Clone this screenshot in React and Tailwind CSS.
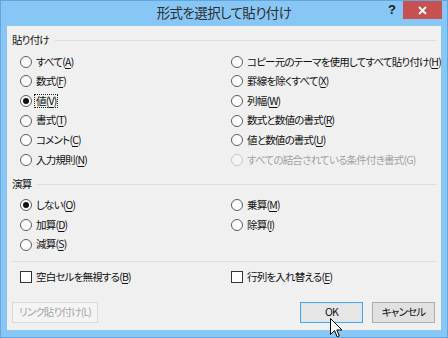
import React from "react";

const font = { fontFamily: '"Noto Sans CJK JP", "Noto Sans", sans-serif' };

function Radio({ checked, disabled }) {
  if (disabled) {
    return <span className="w-[12px] h-[12px] rounded-full border border-[#c6c6c6] bg-[#f4f4f4] shrink-0" />;
  }
  return (
    <span className="w-[12px] h-[12px] rounded-full border border-[#5c5c5c] bg-white shrink-0 flex items-center justify-center">
      {checked ? <span className="w-[6px] h-[6px] rounded-full bg-[#111]" /> : null}
    </span>
  );
}

function Check() {
  return <span className="w-[12px] h-[12px] border border-[#333] bg-white shrink-0" />;
}

function Label({ text, k, focus, disabled }) {
  const inner = (
    <>
      {text}(
      {disabled ? k : <span className="underline underline-offset-[2px]">{k}</span>})
    </>
  );
  return (
    <span
      className={
        focus
          ? "ml-[4px] whitespace-nowrap outline-1 outline-dotted outline-[#222] outline-offset-[1px] text-[#111]"
          : disabled
          ? "ml-[4px] whitespace-nowrap text-[#a2a2a2]"
          : "ml-[4px] whitespace-nowrap text-[#111]"
      }
    >
      {inner}
    </span>
  );
}

function Opt({ text, k, checked, disabled, focus, box }) {
  return (
    <div className="flex items-center h-[19.6px]">
      {box ? <Check /> : <Radio checked={checked} disabled={disabled} />}
      <Label text={text} k={k} focus={focus} disabled={disabled} />
    </div>
  );
}

function Header({ text }) {
  return (
    <div className="flex items-center h-[16px] text-[#111]">
      <span className="whitespace-nowrap">{text}</span>
      <span className="flex-1 h-px bg-[#dcdcdc] ml-[6px]" />
    </div>
  );
}

export default function App() {
  return (
    <div
      className="relative w-[448px] h-[338px] bg-[#88c6f5] border border-[#62a6de] flex flex-col overflow-hidden text-[10.5px] tracking-[-0.8px] leading-none [font-feature-settings:'palt']"
      style={font}
    >
      <div className="h-[25px] flex items-center justify-center text-[13.5px] tracking-[-0.6px] text-[#2e2e2e] pb-[1px] whitespace-nowrap">
        形式を選択して貼り付け
      </div>
      <div className="absolute left-[387px] top-[2px] text-[13px] font-bold text-[#1a1a1a]" style={{ fontFamily: '"Liberation Sans", sans-serif' }}>?</div>
      <div className="absolute left-[402px] top-0 w-[39px] h-[18px] bg-[#c75050] flex items-center justify-center">
        <svg width="9" height="9" viewBox="0 0 9 9">
          <path d="M1 1L8 8M8 1L1 8" stroke="white" strokeWidth="1.8" />
        </svg>
      </div>

      <div className="ml-[6px] w-[434px] h-[304px] bg-[#f0f0f0] px-[5px] flex flex-col">
        <div className="pt-[6px]">
          <Header text="貼り付け" />
        </div>
        <div className="mt-[4px] pl-[8px] grid grid-cols-[211px_1fr]">
          <div className="flex flex-col">
            <Opt text="すべて" k="A" />
            <Opt text="数式" k="F" />
            <Opt text="値" k="V" checked focus />
            <Opt text="書式" k="T" />
            <Opt text="コメント" k="C" />
            <Opt text="入力規則" k="N" />
          </div>
          <div className="flex flex-col">
            <Opt text="コピー元のテーマを使用してすべて貼り付け" k="H" />
            <Opt text="罫線を除くすべて" k="X" />
            <Opt text="列幅" k="W" />
            <Opt text="数式と数値の書式" k="R" />
            <Opt text="値と数値の書式" k="U" />
            <Opt text="すべての結合されている条件付き書式" k="G" disabled />
          </div>
        </div>
        <div className="mt-[7px]">
          <Header text="演算" />
        </div>
        <div className="mt-[3px] pl-[8px] grid grid-cols-[211px_1fr]">
          <div className="flex flex-col">
            <Opt text="しない" k="O" checked />
            <Opt text="加算" k="D" />
            <Opt text="減算" k="S" />
          </div>
          <div className="flex flex-col">
            <Opt text="乗算" k="M" />
            <Opt text="除算" k="I" />
          </div>
        </div>
        <div className="mt-[7px] h-px bg-[#dcdcdc]" />
        <div className="mt-[5px] pl-[8px] grid grid-cols-[211px_1fr]">
          <Opt text="空白セルを無視する" k="B" box />
          <Opt text="行列を入れ替える" k="E" box />
        </div>
        <div className="mt-[15px] flex items-center pr-[1px]">
          <div className="w-[86px] h-[21px] border border-[#d9d9d9] bg-[#f4f4f4] text-[#a6a6a6] flex items-center justify-center whitespace-nowrap">
            リンク貼り付け(L)
          </div>
          <div className="ml-auto w-[63px] h-[21px] border border-[#4fa3e8] bg-[#e6e6e6] shadow-[inset_0_0_0_1px_#cfe6f8] text-[#111] flex items-center justify-center">
            OK
          </div>
          <div className="ml-[9px] w-[63px] h-[21px] border border-[#adadad] bg-[#e1e1e1] text-[#111] flex items-center justify-center whitespace-nowrap">
            キャンセル
          </div>
        </div>
      </div>

      <svg className="absolute left-[329px] top-[317px]" width="13" height="21" viewBox="0 0 13 21">
        <path d="M0.5 0.5 L0.5 16.5 L4.5 12.5 L7.2 18.8 L9.3 17.9 L6.8 12 L12 12 Z" fill="white" stroke="black" strokeWidth="1" strokeLinejoin="miter" />
      </svg>
    </div>
  );
}
